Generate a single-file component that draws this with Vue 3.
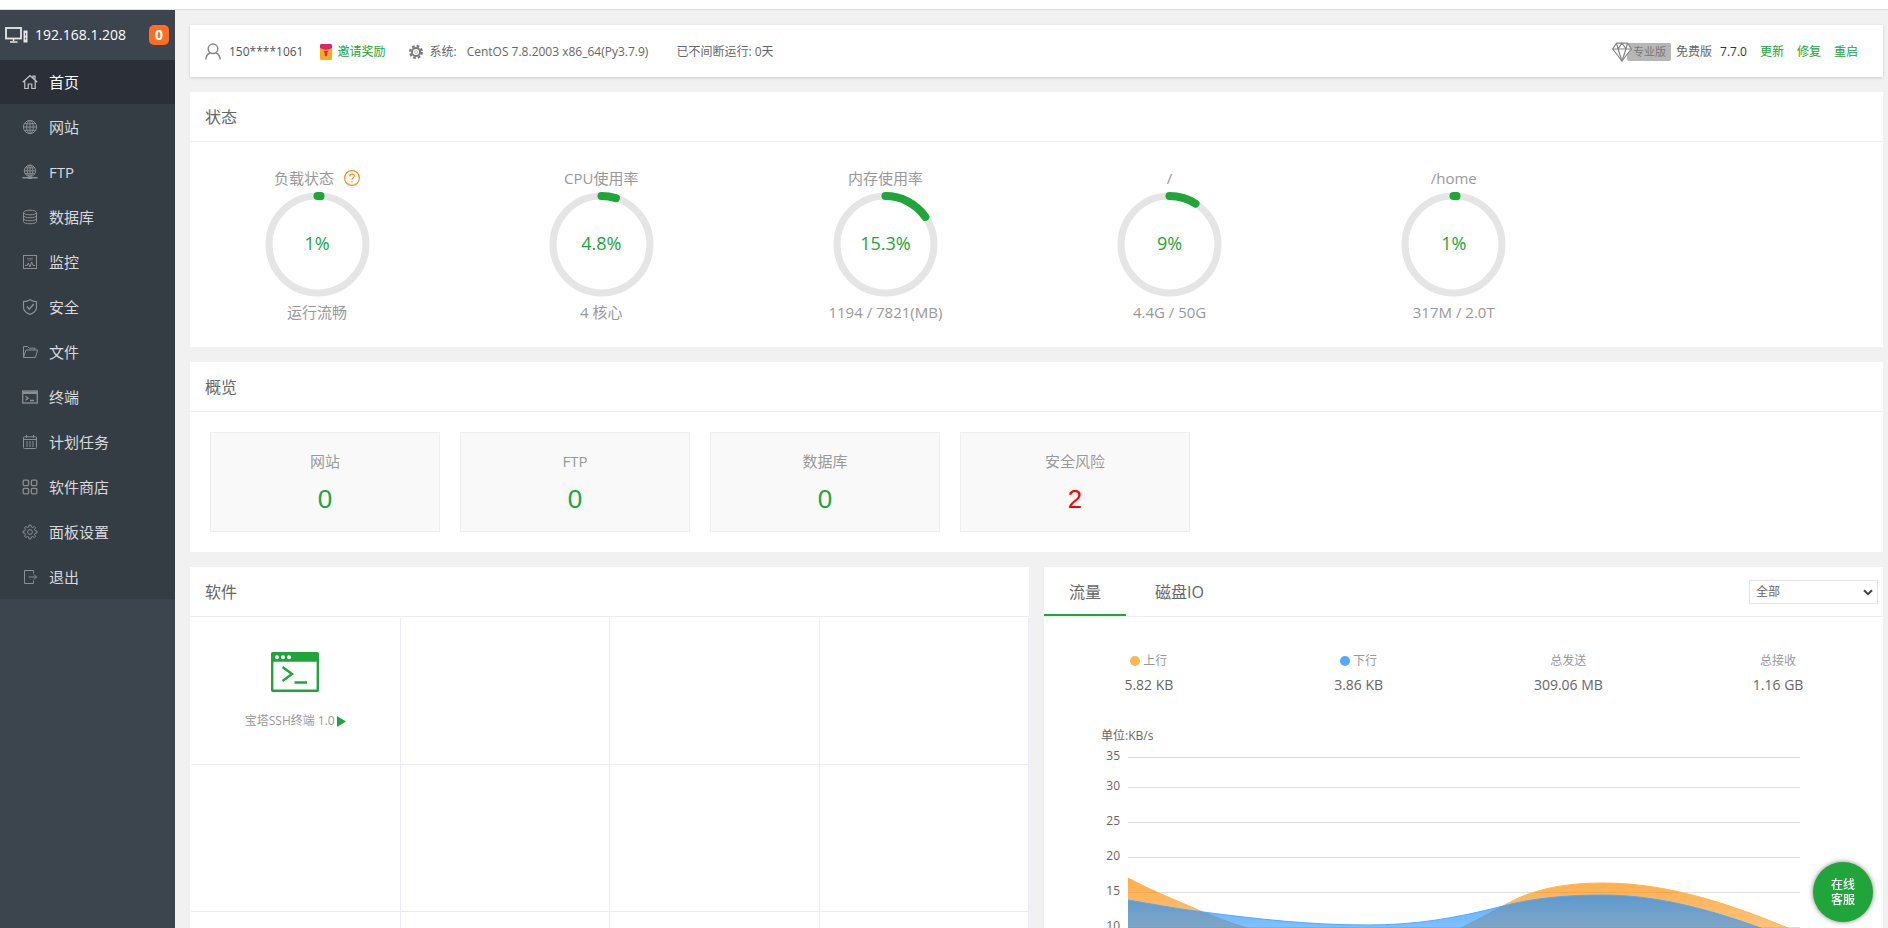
<script setup>
import { ref } from 'vue'

const menu = [
  { name: '首页', icon: 'home', active: true },
  { name: '网站', icon: 'globe' },
  { name: 'FTP', icon: 'ftp' },
  { name: '数据库', icon: 'db' },
  { name: '监控', icon: 'monitor' },
  { name: '安全', icon: 'shield' },
  { name: '文件', icon: 'folder' },
  { name: '终端', icon: 'terminal' },
  { name: '计划任务', icon: 'calendar' },
  { name: '软件商店', icon: 'apps' },
  { name: '面板设置', icon: 'gear' },
  { name: '退出', icon: 'exit' },
]

// Outline of an eight-toothed gear centred on (8, 8)
const gearPath = (() => {
  const points = []
  for (let tooth = 0; tooth < 8; tooth++) {
    for (const [offset, r] of [[-13, 5.3], [-8, 7], [8, 7], [13, 5.3]]) {
      const a = ((tooth * 45 + offset) * Math.PI) / 180
      points.push(`${(8 + r * Math.cos(a)).toFixed(2)} ${(8 + r * Math.sin(a)).toFixed(2)}`)
    }
  }
  return `M${points.join('L')}z`
})()

const radius = 48
const circumference = 2 * Math.PI * radius
const gauges = [
  { title: '负载状态', value: 1, note: '运行流畅', help: true },
  { title: 'CPU使用率', value: 4.8, note: '4 核心' },
  { title: '内存使用率', value: 15.3, note: '1194 / 7821(MB)' },
  { title: '/', value: 9, note: '4.4G / 50G' },
  { title: '/home', value: 1, note: '317M / 2.0T' },
]
const dash = (v) => `${(circumference * v) / 100} ${circumference}`

const overview = [
  { name: '网站', count: 0 },
  { name: 'FTP', count: 0 },
  { name: '数据库', count: 0 },
  { name: '安全风险', count: 2, risk: true },
]

const traffic = [
  { name: '上行', value: '5.82 KB', dot: 'up' },
  { name: '下行', value: '3.86 KB', dot: 'down' },
  { name: '总发送', value: '309.06 MB' },
  { name: '总接收', value: '1.16 GB' },
]

const ticks = [35, 30, 25, 20, 15, 10, 5, 0]
const gridLines = [0, 30, 65, 100, 135, 170, 205, 240]
const upLine = 'M0 121C24 134 50 144 75 155C92 162 105 167 120 171C170 192 290 192 335 170C349 163 362 156 375 149C405 131 440 126 475 126C545 126 610 150 672 176'
const downLine = 'M0 143C24 147 50 152 75 155C130 162 180 168 240 168C285 168 325 162 375 149C405 141 440 138 475 138C535 138 590 156 630 170C645 175 660 181 672 186'

const net = ref('all')
</script>

<template>
  <div class="page">
    <div class="strip"></div>
    <div class="body">
      <aside class="sidebar">
        <div class="host">
          <svg width="23" height="16" viewBox="0 0 23 16" fill="none">
            <rect x="1" y="1" width="15" height="10.500" stroke="#e8e8e8" stroke-width="1.800" />
            <path d="M8.500 12v2M5 15h7.500" stroke="#e8e8e8" stroke-width="1.600" />
            <rect x="18.500" y="3.500" width="4" height="12" fill="#e8e8e8" />
            <path d="M20.500 6v2.500M20.500 10.500v2" stroke="#59616a" />
          </svg>
          <span class="ip">192.168.1.208</span>
          <span class="badge">0</span>
        </div>
        <nav class="menu">
          <a v-for="m in menu" :key="m.name" href="#" :class="{ active: m.active }">
            <svg class="mi" width="16" height="16" viewBox="0 0 16 16" fill="none" stroke="currentColor">
              <g v-if="m.icon === 'home'" stroke-width="1.200"><path d="M.7 8.300L8 1.500l7.300 6.800M2.800 7v7.500h3.400V10h3.600v4.500h3.400V7M11 4V2.200h2v3.600" /></g>
              <g v-else-if="m.icon === 'globe'"><circle cx="8" cy="8" r="6.600" /><ellipse cx="8" cy="8" rx="3.300" ry="6.600" /><path d="M8 1.400v13.200M1.400 8h13.200M2.400 4.700h11.200M2.400 11.300h11.200" /></g>
              <g v-else-if="m.icon === 'ftp'"><circle cx="8" cy="6.800" r="5.700" /><ellipse cx="8" cy="6.800" rx="2.800" ry="5.700" /><path d="M8 1v11.500M2.300 6.800h11.400M3.200 3.900h9.600M3.200 9.700h9.600" /><path d="M.3 13.800h15.400M6 14.300h4" stroke-width="1.600" /></g>
              <g v-else-if="m.icon === 'db'"><ellipse cx="8" cy="3.500" rx="6.500" ry="2.300" /><path d="M1.500 3.500v9c0 3 13 3 13 0v-9M1.500 6.500c0 3 13 3 13 0M1.500 9.500c0 3 13 3 13 0" /></g>
              <g v-else-if="m.icon === 'monitor'"><rect x="1.500" y="1.500" width="13" height="13" /><path d="M5 4.500h6M5.500 6h5" opacity=".6" /><path d="M3 11.500h2l1.300-2.500 1.700 4 1.600-5 1.400 3.500h2" /></g>
              <g v-else-if="m.icon === 'shield'" stroke-width="1.200"><path d="M8 .8c2 1.300 4 1.800 6.500 1.900v5.500c0 3.500-3 5.700-6.500 7.200-3.500-1.500-6.500-3.700-6.500-7.200V2.700C4 2.600 6 2.100 8 .8z" /><path d="M4.800 7.500l2.500 2.700L11.800 5" stroke-width="1.500" /></g>
              <g v-else-if="m.icon === 'folder'"><path d="M1.500 13.500V2.500h4.200l1.500 1.700h5.800V6M1.500 13.500L4 6h11.500l-2 7.500z" /></g>
              <g v-else-if="m.icon === 'terminal'"><rect x=".7" y="2" width="14.600" height="12" stroke-width="1.300" /><path d="M1 3.800h14" stroke-width="2.400" /><path d="M3.500 7.200l2.700 2-2.700 2M8 11.500h4" stroke-width="1.300" /></g>
              <g v-else-if="m.icon === 'calendar'"><rect x="1.500" y="2.800" width="13" height="11.700" rx="1" /><path d="M1.500 5.500h13M4.500.8v3M11.500.8v3" /><path d="M4 8h8.500M4 10h8.500M4 12h8.500" stroke-dasharray="2 1" /></g>
              <g v-else-if="m.icon === 'apps'" stroke-width="1.300"><rect x="1.200" y="1.200" width="5.400" height="5.400" rx="1" /><rect x="9.400" y="1.200" width="5.400" height="5.400" rx="1" /><rect x="1.200" y="9.400" width="5.400" height="5.400" rx="1" /><rect x="9.400" y="9.400" width="5.400" height="5.400" rx="1" /></g>
              <g v-else-if="m.icon === 'gear'"><path :d="gearPath" stroke-linejoin="round" /><circle cx="8" cy="8" r="2.400" /></g>
              <g v-else><path d="M11.500 4.500v-3h-9v13h9v-3M6.500 8h8M12 5.500L14.500 8 12 10.500" /></g>
            </svg>
            <span>{{ m.name }}</span>
          </a>
        </nav>
      </aside>

      <main class="main">
        <header class="card topbar">
          <svg class="user" width="16" height="17" viewBox="0 0 16 17" fill="none" stroke="#888" stroke-width="1.500">
            <circle cx="8" cy="5.800" r="4.800" />
            <path d="M.8 16.500c.2-3.500 1.700-5.500 4.400-6.500M15.200 16.500c-.2-3.500-1.700-5.500-4.400-6.500" />
          </svg>
          <span class="account">150****1061</span>
          <svg class="gift" width="12" height="16" viewBox="0 0 12 16">
            <rect width="12" height="16" rx="1.500" fill="#faa81e" />
            <path d="M0 1.500Q0 0 1.500 0h9Q12 0 12 1.500V4Q6 7.500 0 4z" fill="#e0246b" />
            <path d="M3.500 6.800h5L7.300 8.800v2.400L6 12.500l-1.300-1.300V8.800z" fill="#e0246b" />
          </svg>
          <a class="green invite" href="#">邀请奖励</a>
          <svg class="sys" width="14" height="14" viewBox="0 0 14 14" fill="none" stroke="#777">
            <circle cx="7" cy="7" r="5.900" stroke-width="2.200" stroke-dasharray="2.600 2.030" />
            <circle cx="7" cy="7" r="4.100" stroke-width="2" />
            <circle cx="7" cy="7" r="1.500" stroke="#bbb" stroke-width="1" />
          </svg>
          <span class="sys-label">系统:</span>
          <span class="os">CentOS 7.8.2003 x86_64(Py3.7.9)</span>
          <span class="uptime">已不间断运行: 0天</span>
          <div class="actions">
            <a class="pro" href="#">
              <svg width="20" height="20" viewBox="0 0 20 20" fill="#fff" stroke="#858585" stroke-width="1.200" stroke-linejoin="round">
                <path d="M4.500 1.200h11L19.300 7 10 19 .7 7z" />
                <path d="M.7 7h18.600M4.500 1.200L6 7l4 12 4-12 1.500-5.800M6 7l4-5.800L14 7" fill="none" />
              </svg>
              <span>专业版</span>
            </a>
            <span class="free">免费版</span>
            <span class="version">7.7.0</span>
            <a class="green" href="#">更新</a>
            <a class="green" href="#">修复</a>
            <a class="green" href="#">重启</a>
          </div>
        </header>

        <section class="card">
          <h2>状态</h2>
          <div class="gauges">
            <div v-for="g in gauges" :key="g.title" class="gauge">
              <div class="label">
                <span>{{ g.title }}</span>
                <svg v-if="g.help" width="16" height="16" viewBox="0 0 16 16" fill="none" stroke="#ff8a1c">
                  <circle cx="8" cy="8" r="7.400" stroke-width="1.200" />
                  <path d="M5.700 6.300c0-3 4.700-2.900 4.700-.2C10.400 7.800 8 7.800 8 9.700M8 11v1.300" stroke-width="1.200" />
                </svg>
              </div>
              <div class="ring">
                <svg width="105" height="105" viewBox="0 0 104 104" fill="none">
                  <circle cx="52" cy="52" r="48" stroke="#e5e5e5" stroke-width="7" />
                  <circle cx="52" cy="52" :r="radius" stroke="#20a53a" stroke-width="8" stroke-linecap="round" :stroke-dasharray="dash(g.value)" transform="rotate(-90 52 52)" />
                </svg>
                <span>{{ g.value }}%</span>
              </div>
              <div class="label">{{ g.note }}</div>
            </div>
          </div>
        </section>

        <section class="card">
          <h2>概览</h2>
          <div class="overview">
            <a v-for="o in overview" :key="o.name" class="tile" href="#">
              <span>{{ o.name }}</span>
              <strong :class="{ risk: o.risk }">{{ o.count }}</strong>
            </a>
          </div>
        </section>

        <div class="columns">
          <section class="card">
            <h2>软件</h2>
            <div class="software">
              <div v-for="i in 12" :key="i" class="cell">
                <template v-if="i === 1">
                  <svg width="48" height="40" viewBox="0 0 48 40" fill="none" stroke="#20a53a">
                    <rect x="1.200" y="1.200" width="45.600" height="37.600" rx=".6" stroke-width="2.400" />
                    <path d="M1 5.200h46" stroke-width="9" />
                    <g fill="#fff" stroke="none"><circle cx="6" cy="5.200" r="2" /><circle cx="12" cy="5.200" r="2" /><circle cx="18" cy="5.200" r="2" /></g>
                    <path d="M11.500 15l9.500 7-9.500 7M23.500 30.500h12.500" stroke-width="2.400" />
                  </svg>
                  <a class="soft" href="#">
                    <span>宝塔SSH终端 1.0</span>
                    <svg width="9" height="11" viewBox="0 0 9 11"><path d="M0 0l9 5.500L0 11z" fill="#20a53a" /></svg>
                  </a>
                </template>
              </div>
            </div>
          </section>

          <section class="card">
            <div class="tabs">
              <button class="tab on" type="button">流量</button>
              <button class="tab" type="button">磁盘IO</button>
              <div class="pick">
                <select v-model="net" aria-label="网卡">
                  <option value="all">全部</option>
                </select>
                <svg width="10" height="7" viewBox="0 0 10 7" fill="none"><path d="M1 1.200l4 4 4-4" stroke="#444" stroke-width="2" /></svg>
              </div>
            </div>
            <div class="traffic">
              <div v-for="t in traffic" :key="t.name" class="stat">
                <span class="name"><i v-if="t.dot" :class="t.dot"></i>{{ t.name }}</span>
                <span class="num">{{ t.value }}</span>
              </div>
            </div>
            <div class="chart">
              <div class="unit">单位:KB/s</div>
              <div class="plot">
                <div class="axis"><span v-for="t in ticks" :key="t">{{ t }}</span></div>
                <svg class="graph" viewBox="0 0 672 241" preserveAspectRatio="none" fill="none">
                  <defs>
                    <linearGradient id="upFill" gradientUnits="userSpaceOnUse" x1="0" y1="120" x2="0" y2="240">
                      <stop offset="0" stop-color="#ff8c00" stop-opacity=".72" />
                      <stop offset="1" stop-color="#ff8c00" stop-opacity=".25" />
                    </linearGradient>
                    <linearGradient id="downFill" gradientUnits="userSpaceOnUse" x1="0" y1="137" x2="0" y2="240">
                      <stop offset="0" stop-color="#1e90ff" stop-opacity=".72" />
                      <stop offset="1" stop-color="#1e90ff" stop-opacity=".25" />
                    </linearGradient>
                  </defs>
                  <path v-for="y in gridLines" :key="y" :d="`M0 ${y + 0.5}H672`" stroke="#ddd" />
                  <path :d="upLine + 'V240H0z'" fill="url(#upFill)" />
                  <path :d="upLine" stroke="#f7b851" />
                  <path :d="downLine + 'V240H0z'" fill="url(#downFill)" />
                  <path :d="downLine" stroke="#52a9ff" />
                </svg>
              </div>
            </div>
          </section>
        </div>
      </main>
    </div>
    <button class="service" type="button">在线<br />客服</button>
  </div>
</template>

<style>
body {
  margin: 0;
  background: #f1f1f1;
}
</style>

<style scoped>
* {
  box-sizing: border-box;
}
.page {
  height: 100vh;
  overflow: hidden;
  display: flex;
  flex-direction: column;
  background: #f1f1f1;
  color: #666;
  font: 12px/18px "Open Sans", "Noto Sans CJK SC", sans-serif;
}
a {
  color: inherit;
  text-decoration: none;
}
svg {
  flex: none;
  display: block;
}
button,
select {
  font: inherit;
  color: inherit;
  cursor: pointer;
}
.strip {
  flex: none;
  height: 10px;
  background: #fff;
  border-bottom: 1px solid #ddd;
}
.body {
  flex: 1;
  min-height: 0;
  display: flex;
}
.sidebar {
  flex: none;
  width: 175px;
  background: #3c444d;
}
.host {
  display: flex;
  align-items: center;
  height: 50px;
  padding: 0 6px 0 5px;
  color: #fff;
}
.ip {
  margin-left: 7px;
  font-size: 14px;
}
.badge {
  width: 20px;
  height: 20px;
  margin-left: auto;
  border-radius: 5px;
  background: #ff6c23;
  font-size: 14px;
  font-weight: 700;
  line-height: 20px;
  text-align: center;
}
.menu {
  display: flex;
  flex-direction: column;
  gap: 1px;
  background: #353d44;
}
.menu a {
  display: flex;
  align-items: center;
  gap: 11px;
  height: 44px;
  padding-left: 22px;
  color: #d8dadb;
  font-size: 15px;
}
.menu a.active {
  background: #2b2f37;
  color: #fff;
}
.mi {
  color: #8a8f93;
}
.active .mi {
  color: #c4c6c8;
}
.main {
  flex: 1;
  min-width: 0;
  display: flex;
  flex-direction: column;
  gap: 15px;
  padding: 15px 5px 0 15px;
}
.card {
  flex: none;
  background: #fff;
}
.green {
  color: #20a53a;
}
.topbar {
  display: flex;
  align-items: center;
  height: 52px;
  padding: 1px 25px 0 15px;
  box-shadow: 0 1px 3px rgba(0, 0, 0, 0.15);
}
.account {
  margin-left: 8px;
  color: #555;
}
.gift {
  margin-left: 17px;
}
.invite {
  margin-left: 5px;
}
.sys {
  margin-left: 24px;
}
.sys-label {
  margin-left: 6px;
}
.os {
  margin-left: 10px;
}
.uptime {
  margin-left: 28px;
}
.actions {
  display: flex;
  align-items: center;
  gap: 13px;
  margin-left: auto;
}
.pro {
  display: flex;
  align-items: center;
  margin-right: -8px;
}
.pro span {
  height: 18px;
  margin-left: -5px;
  padding: 0 5px 0 6px;
  border-radius: 2px;
  background: #b6b6b6;
  color: #777;
  font-size: 11px;
}
.pro svg {
  position: relative;
  z-index: 1;
}
.free {
  margin-right: -5px;
}
.version {
  color: #333;
}
h2 {
  height: 50px;
  margin: 0;
  padding-left: 15px;
  border-bottom: 1px solid #eee;
  font-size: 16px;
  font-weight: 400;
  line-height: 50px;
}
.gauges {
  display: grid;
  grid-template-columns: repeat(6, 1fr);
  margin: 0 3px 0 -15px;
  padding: 24px 0;
}
.gauge {
  display: flex;
  flex-direction: column;
  align-items: center;
  gap: 3px;
  color: #999;
  font-size: 15px;
}
.label {
  display: flex;
  align-items: center;
  gap: 10px;
  height: 23px;
}
.ring {
  display: grid;
  place-items: center;
}
.ring > * {
  grid-area: 1 / 1;
}
.ring span {
  padding-bottom: 4px;
  color: #20a53a;
  font-size: 18px;
}
.overview {
  display: flex;
  gap: 20px;
  padding: 20px;
}
.tile {
  width: 230px;
  height: 100px;
  padding-top: 16px;
  border: 1px solid #eee;
  background: #f9f9f9;
  color: #999;
  font-size: 15px;
  line-height: 24px;
  text-align: center;
}
.tile span,
.tile strong {
  display: block;
}
.tile strong {
  margin-top: 11px;
  color: #20a53a;
  font: 26px/30px "Liberation Sans", Arial, sans-serif;
}
.tile strong.risk {
  color: #f00;
}
.columns {
  display: grid;
  grid-template-columns: 1fr 1fr;
  gap: 15px;
}
.software {
  display: grid;
  grid-template-columns: repeat(4, 1fr);
  grid-auto-rows: 147px;
  padding: 1px 0 0 1px;
}
.cell {
  display: flex;
  flex-direction: column;
  align-items: center;
  padding-top: 34px;
  border: solid #ebebfb;
  border-width: 0 1px 1px 0;
}
.soft {
  display: flex;
  align-items: center;
  gap: 2px;
  margin-top: 20px;
  color: #999;
}
.tabs {
  display: flex;
  gap: 4px;
  height: 50px;
  padding-right: 5px;
  border-bottom: 1px solid #eee;
}
.tab {
  padding: 0 25px;
  border: 0;
  background: none;
  font-size: 16px;
}
.tab.on {
  box-shadow: inset 0 -2px #20a53a;
}
.pick {
  display: grid;
  align-items: center;
  width: 129px;
  height: 24px;
  margin: 13px 0 0 auto;
}
.pick > * {
  grid-area: 1 / 1;
}
.pick select {
  width: 100%;
  height: 24px;
  padding: 0 6px;
  border: 1px solid #e6e6e6;
  background: #fff;
  appearance: none;
}
.pick svg {
  justify-self: end;
  margin-right: 5px;
  pointer-events: none;
}
.traffic {
  display: grid;
  grid-template-columns: repeat(4, 1fr);
  padding-top: 35px;
}
.stat {
  display: flex;
  flex-direction: column;
  align-items: center;
}
.name {
  display: flex;
  align-items: center;
  gap: 3px;
  color: #999;
}
.name i {
  width: 10px;
  height: 10px;
  border-radius: 50%;
}
.up {
  background: #f7b851;
}
.down {
  background: #52a9ff;
}
.num {
  margin-top: 3px;
  font-size: 14px;
  line-height: 24px;
}
.chart {
  padding: 30px 83px 0 57px;
}
.plot {
  display: flex;
  gap: 8px;
  padding-top: 12px;
}
.unit {
  height: 18px;
}
.axis {
  display: flex;
  flex-direction: column;
  width: 19px;
  gap: 17px;
  margin-top: -10px;
  text-align: right;
}
.axis span:first-child {
  margin-bottom: -5px;
}
.graph {
  flex: 1;
  min-width: 0;
  height: 241px;
}
.service {
  position: fixed;
  right: 15px;
  bottom: 6px;
  width: 60px;
  height: 60px;
  padding: 0;
  border: 0;
  border-radius: 50%;
  background: #20a53a;
  box-shadow: 0 0 5px rgba(0, 0, 0, 0.5);
  color: #fff;
  font-weight: 500;
  line-height: 15px;
}
</style>
